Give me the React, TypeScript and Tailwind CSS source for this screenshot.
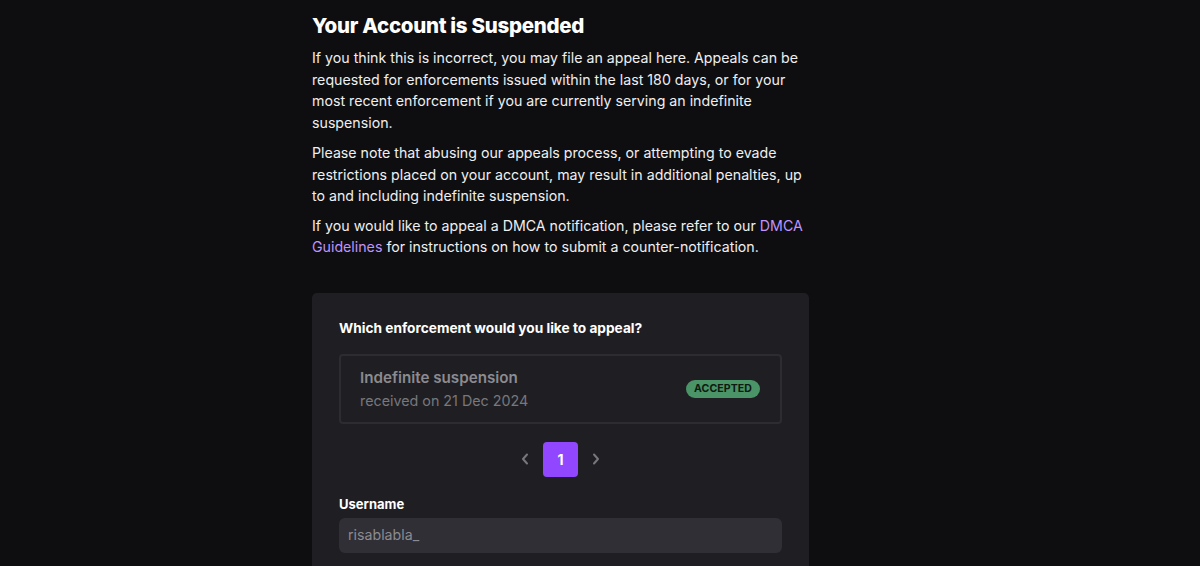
import React from "react";

export default function App() {
  return (
    <div
      className="min-h-[566px] w-full bg-[#0e0e10] pl-[312px] text-[#efeff1]"
      style={{ fontFamily: "Inter, 'Noto Sans', sans-serif" }}
    >
      <div className="w-[497px] pt-[12px]">
        <h1 className="text-[20.5px] font-extrabold leading-[28px] tracking-[-0.3px] text-white">
          Your Account is Suspended
        </h1>
        <div className="mt-[7px] text-[14.2px] leading-[21.5px] text-[#efeff1]">
          <p>
            If you think this is incorrect, you may file an appeal here. Appeals can be
            requested for enforcements issued within the last 180 days, or for your most
            recent enforcement if you are currently serving an indefinite suspension.
          </p>
          <p className="mt-[9px]">
            Please note that abusing our appeals process, or attempting to evade
            restrictions placed on your account, may result in additional penalties, up to
            and including indefinite suspension.
          </p>
          <p className="mt-[8px]">
            If you would like to appeal a DMCA notification, please refer to our{" "}
            <a className="text-[#bf94ff]">DMCA Guidelines</a> for instructions on how to
            submit a counter-notification.
          </p>
        </div>

        <div className="mt-[35px] rounded-[5px] bg-[#1f1f23] px-[27px] pt-[25px] pb-[20px]">
          <div className="text-[13.7px] font-bold leading-[20px] text-white">
            Which enforcement would you like to appeal?
          </div>
          <div className="mt-[16px] flex items-center justify-between rounded-[4px] border-2 border-[#2c2c31] px-[19px] py-[10px]">
            <div>
              <div className="text-[15.2px] font-semibold leading-[24px] text-[#8b8b91]">
                Indefinite suspension
              </div>
              <div className="text-[14.3px] leading-[22px] text-[#77777c]">
                received on 21 Dec 2024
              </div>
            </div>
            <span className="mr-[1px] rounded-full bg-[#4a9467] px-[8px] py-[1px] text-[10.5px] font-bold leading-[16px] tracking-[0.1px] text-[#0e1a12]">
              ACCEPTED
            </span>
          </div>

          <div className="mt-[18px] flex items-center justify-center gap-[8px]">
            <button className="flex h-[35px] w-[12px] items-center justify-center text-[#77777c]">
              <svg width="10" height="14" viewBox="0 0 10 14" fill="none">
                <path d="M7 2.5 L3 7 L7 11.5" stroke="currentColor" strokeWidth="2" strokeLinecap="round" strokeLinejoin="round" />
              </svg>
            </button>
            <button className="mx-[4px] flex h-[35px] w-[35px] items-center justify-center rounded-[4px] bg-[#9147ff] text-[14px] font-bold text-white">
              1
            </button>
            <button className="flex h-[35px] w-[12px] items-center justify-center text-[#77777c]">
              <svg width="10" height="14" viewBox="0 0 10 14" fill="none">
                <path d="M3 2.5 L7 7 L3 11.5" stroke="currentColor" strokeWidth="2" strokeLinecap="round" strokeLinejoin="round" />
              </svg>
            </button>
          </div>

          <div className="mt-[17px] text-[13px] font-bold leading-[20px] text-white">
            Username
          </div>
          <div className="mt-[4px] flex h-[35px] items-center rounded-[6px] bg-[#2f2f35] px-[9px] text-[14.2px] text-[#8b8b91]">
            risablabla_
          </div>
        </div>
      </div>
    </div>
  );
}
